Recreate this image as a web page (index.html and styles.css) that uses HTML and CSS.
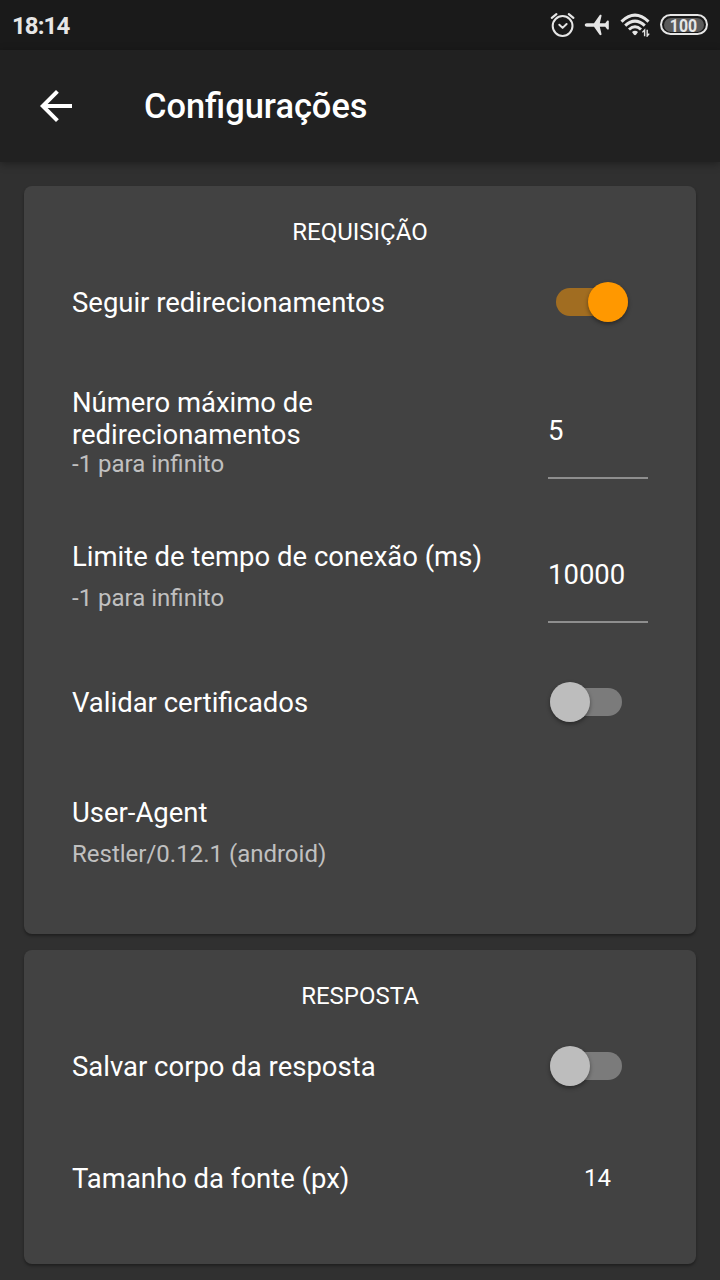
FILE: index.html
```html
<!DOCTYPE html>
<html lang="pt-BR">
<head>
<meta charset="utf-8">
<title>Configurações</title>
<link rel="stylesheet" href="styles.css">
</head>
<body>
<div class="status">
  <span class="clock">18:14</span>
  <div class="status-icons">
    <svg class="alarm" width="26" height="26" viewBox="0 0 26 26" fill="none" stroke="#e6e6e6" stroke-linecap="round">
      <circle cx="12.600" cy="14" r="9.900" stroke-width="2"/>
      <path d="M9.300 12.700l3.300 3.200 4-3.900" stroke-width="2" stroke-linejoin="round"/>
      <path d="M1.800 5.900 6.400 2.200M18.800 2.200l4.600 3.700" stroke-width="2.200"/>
    </svg>
    <svg class="plane" width="26" height="22" viewBox="0 0 26 22" fill="#e6e6e6">
      <path d="M.8 11c0-.9.8-1.700 2-1.700h7.200L15.600 1.200c.6-.8 2.300-.5 1.900.7L15.800 9.300h5.400l1.900-2.500c.4-.5 1.700-.5 1.700.3v7.800c0 .8-1.300.8-1.700.3l-1.900-2.500h-5.400l1.700 7.400c.4 1.200-1.300 1.500-1.900.7L10 12.700H2.800c-1.200 0-2-.8-2-1.700z"/>
    </svg>
    <svg class="wifi" width="30" height="24" viewBox="0 0 30 24" fill="none" stroke="#e6e6e6">
      <path d="M1.500 8.600Q15-4.200 28.500 8.600M5.200 12.600Q15 3.600 24.800 12.600M9 16.500Q15 11 21 16.500" stroke-width="3"/>
      <path d="M12 19q3-2.500 6 0L16 21.700q-1 .9-2 0z" fill="#e6e6e6" stroke="none"/>
      <path d="M24.600 23.300v-6.300l-2.200 2.400M27.200 16.700V23l2-2.400" stroke-width="1.400"/>
    </svg>
    <span class="battery"><span class="charge"><span class="digits">100</span></span></span>
  </div>
</div>
<header class="appbar">
  <svg class="back" width="48" height="48" viewBox="0 0 24 24" fill="#fff"><path d="M20 11H7.830l5.590-5.590L12 4l-8 8 8 8 1.410-1.410L7.830 13H20v-2z"/></svg>
  <h1>Configurações</h1>
</header>
<main>
  <section class="card">
    <h2>REQUISIÇÃO</h2>
    <div class="row">
      <div class="label single">Seguir redirecionamentos</div>
      <span class="switch on"><span class="thumb"></span></span>
    </div>
    <div class="row tall">
      <div class="text dense">
        <div class="label">Número máximo de redirecionamentos</div>
        <div class="hint">-1 para infinito</div>
      </div>
      <div class="field">5</div>
    </div>
    <div class="row tall">
      <div class="text">
        <div class="label">Limite de tempo de conexão (ms)</div>
        <div class="hint">-1 para infinito</div>
      </div>
      <div class="field">10000</div>
    </div>
    <div class="row">
      <div class="label single">Validar certificados</div>
      <span class="switch"><span class="thumb"></span></span>
    </div>
    <div class="row tall">
      <div class="text">
        <div class="label">User-Agent</div>
        <div class="hint">Restler/0.12.1 (android)</div>
      </div>
    </div>
  </section>
  <section class="card short">
    <h2>RESPOSTA</h2>
    <div class="row">
      <div class="label single">Salvar corpo da resposta</div>
      <span class="switch"><span class="thumb"></span></span>
    </div>
    <div class="row">
      <div class="label single">Tamanho da fonte (px)</div>
      <div class="value">14</div>
    </div>
  </section>
</main>
</body>
</html>
```
FILE: styles.css
```css
* { box-sizing: border-box; }
body {
  margin: 0;
  height: 1280px;
  overflow: hidden;
  display: flex;
  flex-direction: column;
  background: #303030;
  color: #fff;
  font-family: Roboto, "Noto Sans", sans-serif;
}
.status {
  flex: none;
  height: 50px;
  padding: 0 12px;
  display: flex;
  align-items: center;
  justify-content: space-between;
  background: #1a1a1a;
  color: #e6e6e6;
}
.clock { font-size: 24px; font-weight: 700; line-height: 28px; padding-top: 2px; letter-spacing: -.9px; }
.status-icons { display: flex; align-items: center; }
.plane { margin-left: 8px; }
.wifi { margin-left: 10px; }
.battery {
  width: 48px;
  height: 21px;
  margin: 0 0 1px 10px;
  padding: 1.5px 2px;
  border: 2px solid #e6e6e6;
  border-radius: 10.5px;
  display: flex;
}
.charge {
  flex: 1;
  border-radius: 7px;
  background: #5a5a5a;
  font-size: 18px;
  font-weight: 700;
  line-height: 15px;
  text-align: center;
}
.digits { display: inline-block; margin-right: 2px; transform: scaleX(.88); }
.appbar {
  flex: none;
  position: relative;
  height: 112px;
  padding-left: 32px;
  display: flex;
  align-items: center;
  background: #212121;
  box-shadow: 0 2px 8px rgba(0, 0, 0, .35);
}
h1 { margin: 0 0 0 64px; font-size: 34.4px; font-weight: 500; line-height: 42px; }
main { padding: 24px; display: flex; flex-direction: column; gap: 16px; }
.card {
  height: 748px;
  padding: 32px 48px 0;
  border-radius: 8px;
  background: #424242;
  box-shadow: 0 2px 3px rgba(0, 0, 0, .35);
}
.card.short { height: 314px; }
h2 { margin: 0; height: 28px; font-size: 24px; font-weight: 400; line-height: 28px; text-align: center; }
.row { height: 112px; display: flex; align-items: center; justify-content: space-between; }
.row.tall { height: 144px; }
.label { font-size: 27.48px; line-height: 32px; }
.single { padding-top: 2px; }
.hint { margin-top: 11px; font-size: 24px; line-height: 28px; color: #c0c0c0; }
.text { padding-top: 5px; }
.dense { width: 320px; }
.dense .hint { margin-top: -1px; }
.field {
  width: 100px;
  height: 98px;
  border-bottom: 2px solid #8e8e8e;
  font-size: 27.5px;
  line-height: 100px;
}
.switch {
  width: 72px;
  height: 28px;
  margin-right: 26px;
  border-radius: 14px;
  background: #7b7b7b;
  display: flex;
  align-items: center;
}
.switch.on { margin-right: 20px; background: #a16d21; justify-content: flex-end; }
.thumb {
  flex: none;
  width: 40px;
  height: 40px;
  border-radius: 50%;
  background: #bdbdbd;
  box-shadow: 0 2px 4px rgba(0, 0, 0, .4);
}
.on .thumb { background: #ff9800; }
.value { width: 101px; font-size: 24px; line-height: 28px; text-align: center; }
```
